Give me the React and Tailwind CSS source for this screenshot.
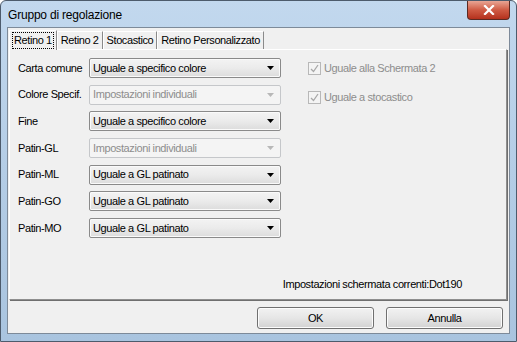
import { useState } from 'react';

const rows = [
  { label: 'Carta comune', value: 'Uguale a specifico colore', disabled: false },
  { label: 'Colore Specif.', value: 'Impostazioni individuali', disabled: true },
  { label: 'Fine', value: 'Uguale a specifico colore', disabled: false },
  { label: 'Patin-GL', value: 'Impostazioni individuali', disabled: true },
  { label: 'Patin-ML', value: 'Uguale a GL patinato', disabled: false },
  { label: 'Patin-GO', value: 'Uguale a GL patinato', disabled: false },
  { label: 'Patin-MO', value: 'Uguale a GL patinato', disabled: false },
];

const tabs = ['Retino 1', 'Retino 2', 'Stocastico', 'Retino Personalizzato'];

function Combo({ value, disabled }) {
  return (
    <div
      className={
        disabled
          ? 'w-[192px] h-[20px] flex items-center border border-[#c5c7ca] bg-[#f4f4f4] rounded-[2px] pl-[3px] pr-[6px] text-[#8d8d8d]'
          : 'w-[192px] h-[20px] flex items-center border border-[#8a8a8a] bg-gradient-to-b from-[#f3f3f3] via-[#ebebeb] to-[#dcdcdc] rounded-[2px] pl-[3px] pr-[6px] text-black shadow-[inset_0_0_0_1px_#fafafa]'
      }
    >
      <span className="flex-1 truncate">{value}</span>
      <svg width="7" height="4" viewBox="0 0 7 4">
        <path d="M0 0 H7 L3.5 4 Z" fill={disabled ? '#b8b8b8' : '#000'} />
      </svg>
    </div>
  );
}

function Check({ label }) {
  return (
    <div className="flex items-center gap-[3px] text-[#8d8d8d]">
      <div className="w-[13px] h-[13px] border border-[#b8b8b8] bg-[#f4f4f4] flex items-center justify-center">
        <svg width="9" height="9" viewBox="0 0 9 9">
          <path d="M1 5 L3.5 7.5 L8 1" stroke="#a8a8a8" strokeWidth="1.3" fill="none" />
        </svg>
      </div>
      <span>{label}</span>
    </div>
  );
}

export default function App() {
  const [active] = useState(0);

  return (
    <div
      className="w-[517px] h-[342px] flex flex-col bg-gradient-to-b from-[#c2d8ee] via-[#b4cde6] to-[#a9c4df] border border-[#4d5b6c] rounded-t-[6px] overflow-hidden text-[11px] leading-none tracking-[-0.4px]"
      style={{ fontFamily: '"Liberation Sans", Arial, sans-serif' }}
    >
      {/* Title bar */}
      <div className="h-[26px] flex items-start shrink-0">
        <div className="flex-1 pl-[7px] pt-[8px] text-[12px] tracking-[-0.2px] text-black">
          Gruppo di regolazione
        </div>
        <div className="mr-[6px] w-[43px] h-[19px] rounded-b-[4px] border border-t-0 border-[#5b2a22] bg-gradient-to-b from-[#e8a594] via-[#cf5a43] to-[#b4301c] flex items-center justify-center">
          <svg width="12" height="10" viewBox="0 0 12 10">
            <path d="M2 1 L10 9 M10 1 L2 9" stroke="#fff" strokeWidth="2.2" strokeLinecap="square" />
          </svg>
        </div>
      </div>

      {/* Client area */}
      <div className="mx-[6px] h-[307px] flex flex-col bg-[#f0f0f0] border border-[#7d8a99]">
        <div className="flex items-end pl-[1px] pt-[1px] h-[21px] shrink-0">
          {tabs.map((t, i) => (
            <div
              key={t}
              className={
                i === active
                  ? 'h-[20px] px-[2px] flex items-center bg-[#f0f0f0] border border-b-0 border-t-white border-l-white border-r-[#8a8a8a] relative z-10 -mb-[1px]'
                  : 'h-[18px] px-[3px] flex items-center bg-[#f0f0f0] border border-b-0 border-t-white border-l-white border-r-[#8a8a8a]'
              }
            >
              {i === active ? (
                <span className="border border-dotted border-black px-[1px] py-[2px]">{t}</span>
              ) : (
                <span className="text-black">{t}</span>
              )}
            </div>
          ))}
        </div>

        <div className="mx-[1px] mr-[2px] h-[251px] border border-t-white border-l-white border-r-[#8e8e8e] border-b-[#8e8e8e] shadow-[1px_1px_0_#6f6f6f] flex flex-col">
          <div className="flex pt-[8px] pl-[8px]">
            <div className="flex flex-col gap-[6.7px]">
              {rows.map((r) => (
                <div key={r.label} className="flex items-center h-[20px]">
                  <span className="w-[71px] text-black">{r.label}</span>
                  <Combo value={r.value} disabled={r.disabled} />
                </div>
              ))}
            </div>
            <div className="ml-[27px] pt-[4px] flex flex-col gap-[16px]">
              <Check label="Uguale alla Schermata 2" />
              <Check label="Uguale a stocastico" />
            </div>
          </div>
          <div className="flex-1" />
          <div className="flex justify-end pr-[44px] pb-[9px] text-black">
            Impostazioni schermata correnti:Dot190
          </div>
        </div>

        <div className="flex-1 flex items-start justify-end gap-[12px] pt-[7px] pr-[6px]">
          {['OK', 'Annulla'].map((b) => (
            <div
              key={b}
              className="w-[117px] h-[22px] flex items-center justify-center rounded-[3px] border border-[#707070] bg-gradient-to-b from-[#f2f2f2] via-[#e6e6e6] to-[#d2d2d2] shadow-[inset_0_0_0_1px_#fcfcfc] text-black"
            >
              {b}
            </div>
          ))}
        </div>
      </div>
      <div className="flex-1" />
    </div>
  );
}
